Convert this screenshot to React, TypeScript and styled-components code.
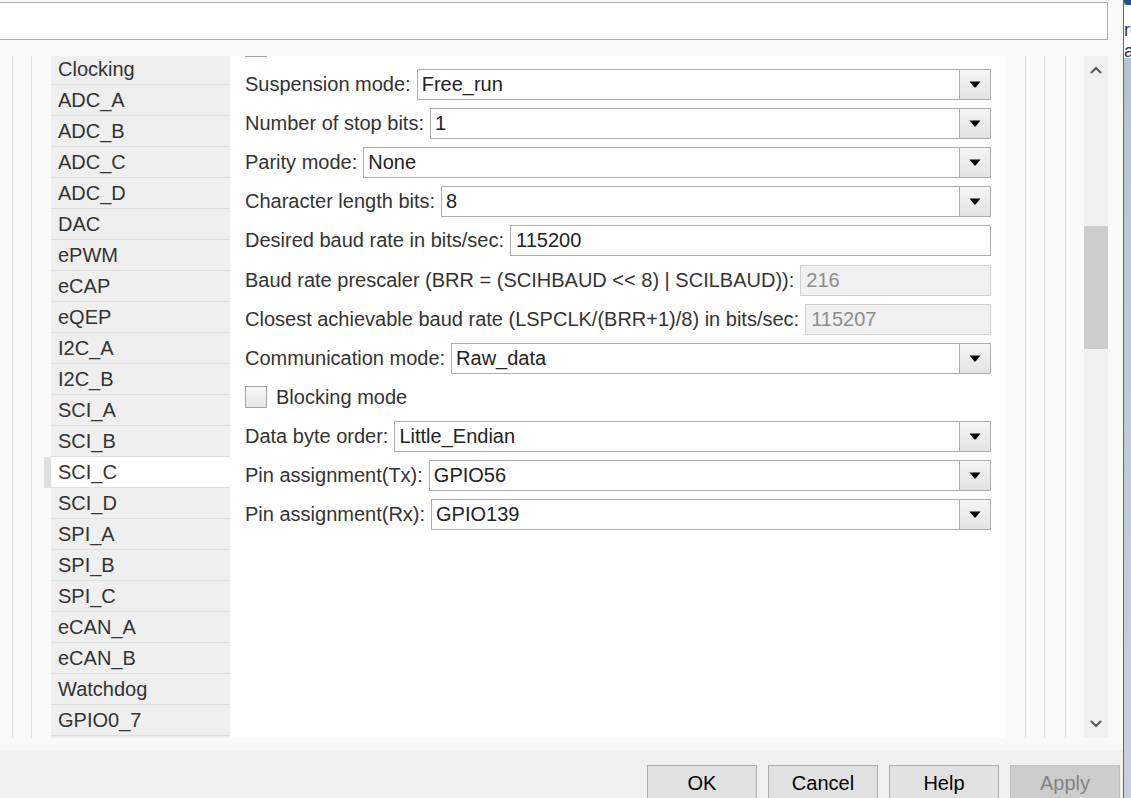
import React, { FC } from "react";
import styled, { createGlobalStyle } from "styled-components";

const GlobalStyle = createGlobalStyle`
  html, body {
    margin: 0;
    padding: 0;
    background: #f9f9f9;
  }
  body {
    font-family: "Liberation Sans", Arial, sans-serif;
    overflow: hidden;
  }
`;

const Screen = styled.div`
  width: 1131px;
  height: 798px;
  display: flex;
  overflow: hidden;
`;

const Dialog = styled.div`
  width: 1123px;
  display: flex;
  flex-direction: column;
  background: #f9f9f9;
`;

const WindowEdge = styled.div`
  width: 1px;
  background: #2f73c9;
`;

const BackWindow = styled.div`
  width: 7px;
  display: flex;
  flex-direction: column;
  overflow: hidden;
  background: linear-gradient(#b7c2d2, #c9d0dc);
`;

const BackWindowCap = styled.div`
  height: 5px;
  background: #1d4f91;
  border-bottom-left-radius: 4px;
`;

const BackWindowText = styled.div`
  height: 53px;
  background: #ffffff;
  color: #1f3552;
  font-size: 18px;
  line-height: 21px;
  padding-top: 15px;
  box-sizing: border-box;
  white-space: nowrap;
`;

const TopBar = styled.div`
  height: 56px;
  padding-top: 2px;
  box-sizing: border-box;
`;

const PathField = styled.div`
  width: 1108px;
  height: 38px;
  box-sizing: border-box;
  background: #ffffff;
  border: 1px solid #adadad;
  border-left: none;
`;

const Main = styled.div`
  height: 682px;
  display: flex;
`;

const Gutter = styled.div<{ $width: number }>`
  width: ${(p) => p.$width}px;
  display: flex;
  flex-shrink: 0;
`;

const Guide = styled.div<{ $width: number; $line?: boolean }>`
  width: ${(p) => p.$width}px;
  flex-shrink: 0;
  border-right: ${(p) => (p.$line ? "1px solid #e3e3e3" : "none")};
`;

const CategoryList = styled.div`
  width: 186px;
  flex-shrink: 0;
  overflow: hidden;
`;

const CategoryScroll = styled.div`
  margin-top: -2px;
`;

const Category = styled.div<{ $selected?: boolean }>`
  height: 30px;
  line-height: 30px;
  margin-left: ${(p) => (p.$selected ? 0 : 7)}px;
  border-left: ${(p) => (p.$selected ? "7px solid #e0e0e0" : "none")};
  border-bottom: 1px solid #e0e0e0;
  background: ${(p) => (p.$selected ? "#ffffff" : "#efefef")};
  padding-left: 7px;
  font-size: 20px;
  color: #333333;
  white-space: nowrap;
`;

const FormPanel = styled.div`
  width: 775px;
  flex-shrink: 0;
  background: #ffffff;
  overflow: hidden;
  padding: 0 14px 0 15px;
  box-sizing: border-box;
`;

const FormScroll = styled.div`
  margin-top: -26px;
  display: flex;
  flex-direction: column;
  gap: 8.1px;
`;

const Row = styled.div`
  height: 31px;
  display: flex;
  align-items: center;
  gap: 6px;
`;

const Label = styled.span`
  font-size: 20px;
  color: #333333;
  white-space: nowrap;
`;

const Select = styled.div`
  flex: 1;
  height: 31px;
  display: flex;
  box-sizing: border-box;
  border: 1px solid #adadad;
  background: #ffffff;
`;

const SelectValue = styled.div`
  flex: 1;
  padding-left: 4px;
  font-size: 20px;
  line-height: 28px;
  color: #222222;
  white-space: nowrap;
`;

const SelectButton = styled.div`
  width: 30px;
  display: flex;
  align-items: center;
  justify-content: center;
  border-left: 1px solid #adadad;
  background: linear-gradient(#f5f5f5, #e3e3e3);
`;

const TextField = styled.div<{ $disabled?: boolean }>`
  flex: 1;
  height: 31px;
  box-sizing: border-box;
  border: 1px solid ${(p) => (p.$disabled ? "#d0d0d0" : "#adadad")};
  background: ${(p) => (p.$disabled ? "#f0f0f0" : "#ffffff")};
  color: ${(p) => (p.$disabled ? "#8d8d8d" : "#222222")};
  padding-left: 5px;
  font-size: 20px;
  line-height: 28px;
`;

const CheckRow = styled(Row)`
  gap: 9px;
`;

const CheckBox = styled.div`
  width: 22px;
  height: 22px;
  box-sizing: border-box;
  border: 1px solid #a6a6a6;
  background: linear-gradient(#f7f7f7, #e6e6e6);
`;

const Scrollbar = styled.div`
  width: 24px;
  flex-shrink: 0;
  background: #f0f0f0;
  display: flex;
  flex-direction: column;
`;

const ScrollArrow = styled.div`
  height: 28px;
  display: flex;
  align-items: center;
  justify-content: center;
`;

const ScrollTrack = styled.div`
  flex: 1;
  padding-top: 142px;
`;

const ScrollThumb = styled.div`
  height: 123px;
  background: #cdcdcd;
`;

const RightMargin = styled.div`
  width: 15px;
  flex-shrink: 0;
`;

const BottomGap = styled.div`
  height: 12px;
`;

const ButtonBar = styled.div`
  flex: 1;
  background: #f0f0f0;
  display: flex;
  justify-content: flex-end;
  align-items: flex-start;
  gap: 11px;
  padding: 15px 3px 0 0;
  overflow: hidden;
`;

const DialogButton = styled.div<{ $disabled?: boolean }>`
  width: 110px;
  height: 36px;
  flex-shrink: 0;
  box-sizing: border-box;
  border: 1px solid ${(p) => (p.$disabled ? "#bfbfbf" : "#adadad")};
  background: ${(p) => (p.$disabled ? "#cccccc" : "#e1e1e1")};
  color: ${(p) => (p.$disabled ? "#838383" : "#000000")};
  font-size: 20px;
  line-height: 34px;
  text-align: center;
`;

const DownTriangle: FC = () => (
  <svg width="12" height="7" viewBox="0 0 12 7">
    <path d="M0.5 0.5 H11.5 L6.8 6.2 Q6 7 5.2 6.2 Z" fill="#000000" />
  </svg>
);

const Chevron: FC<{ up?: boolean }> = ({ up }) => (
  <svg width="12" height="8" viewBox="0 0 12 8">
    <polyline
      points={up ? "1,7 6,2 11,7" : "1,1 6,6 11,1"}
      fill="none"
      stroke="#5a5a5a"
      strokeWidth="2.2"
    />
  </svg>
);

const categories = [
  "Clocking",
  "ADC_A",
  "ADC_B",
  "ADC_C",
  "ADC_D",
  "DAC",
  "ePWM",
  "eCAP",
  "eQEP",
  "I2C_A",
  "I2C_B",
  "SCI_A",
  "SCI_B",
  "SCI_C",
  "SCI_D",
  "SPI_A",
  "SPI_B",
  "SPI_C",
  "eCAN_A",
  "eCAN_B",
  "Watchdog",
  "GPIO0_7",
  "GPIO8_15",
];

type Param =
  | { kind: "select"; label: string; value: string }
  | { kind: "text"; label: string; value: string; disabled?: boolean }
  | { kind: "check"; label: string };

const params: Param[] = [
  { kind: "check", label: "Enable loopback" },
  { kind: "select", label: "Suspension mode:", value: "Free_run" },
  { kind: "select", label: "Number of stop bits:", value: "1" },
  { kind: "select", label: "Parity mode:", value: "None" },
  { kind: "select", label: "Character length bits:", value: "8" },
  { kind: "text", label: "Desired baud rate in bits/sec:", value: "115200" },
  {
    kind: "text",
    label: "Baud rate prescaler (BRR = (SCIHBAUD << 8) | SCILBAUD)):",
    value: "216",
    disabled: true,
  },
  {
    kind: "text",
    label: "Closest achievable baud rate (LSPCLK/(BRR+1)/8) in bits/sec:",
    value: "115207",
    disabled: true,
  },
  { kind: "select", label: "Communication mode:", value: "Raw_data" },
  { kind: "check", label: "Blocking mode" },
  { kind: "select", label: "Data byte order:", value: "Little_Endian" },
  { kind: "select", label: "Pin assignment(Tx):", value: "GPIO56" },
  { kind: "select", label: "Pin assignment(Rx):", value: "GPIO139" },
];

const ParamRow: FC<{ param: Param }> = ({ param }) => {
  if (param.kind === "check") {
    return (
      <CheckRow>
        <CheckBox />
        <Label>{param.label}</Label>
      </CheckRow>
    );
  }
  if (param.kind === "text") {
    return (
      <Row>
        <Label>{param.label}</Label>
        <TextField $disabled={param.disabled}>{param.value}</TextField>
      </Row>
    );
  }
  return (
    <Row>
      <Label>{param.label}</Label>
      <Select>
        <SelectValue>{param.value}</SelectValue>
        <SelectButton>
          <DownTriangle />
        </SelectButton>
      </Select>
    </Row>
  );
};

const App: FC = () => {
  return (
    <>
      <GlobalStyle />
      <Screen>
        <Dialog>
          <TopBar>
            <PathField />
          </TopBar>
          <Main>
            <Gutter $width={44}>
              <Guide $width={12} $line />
              <Guide $width={18} $line />
            </Gutter>
            <CategoryList>
              <CategoryScroll>
                {categories.map((name) => (
                  <Category key={name} $selected={name === "SCI_C"}>
                    {name}
                  </Category>
                ))}
              </CategoryScroll>
            </CategoryList>
            <FormPanel>
              <FormScroll>
                {params.map((p) => (
                  <ParamRow key={p.label} param={p} />
                ))}
              </FormScroll>
            </FormPanel>
            <Gutter $width={79}>
              <Guide $width={20} $line />
              <Guide $width={18} $line />
              <Guide $width={20} $line />
            </Gutter>
            <Scrollbar>
              <ScrollArrow>
                <Chevron up />
              </ScrollArrow>
              <ScrollTrack>
                <ScrollThumb />
              </ScrollTrack>
              <ScrollArrow>
                <Chevron />
              </ScrollArrow>
            </Scrollbar>
            <RightMargin />
          </Main>
          <BottomGap />
          <ButtonBar>
            <DialogButton>OK</DialogButton>
            <DialogButton>Cancel</DialogButton>
            <DialogButton>Help</DialogButton>
            <DialogButton $disabled>Apply</DialogButton>
          </ButtonBar>
        </Dialog>
        <WindowEdge />
        <BackWindow>
          <BackWindowCap />
          <BackWindowText>
            ro
            <br />a
          </BackWindowText>
        </BackWindow>
      </Screen>
    </>
  );
};

export default App;
